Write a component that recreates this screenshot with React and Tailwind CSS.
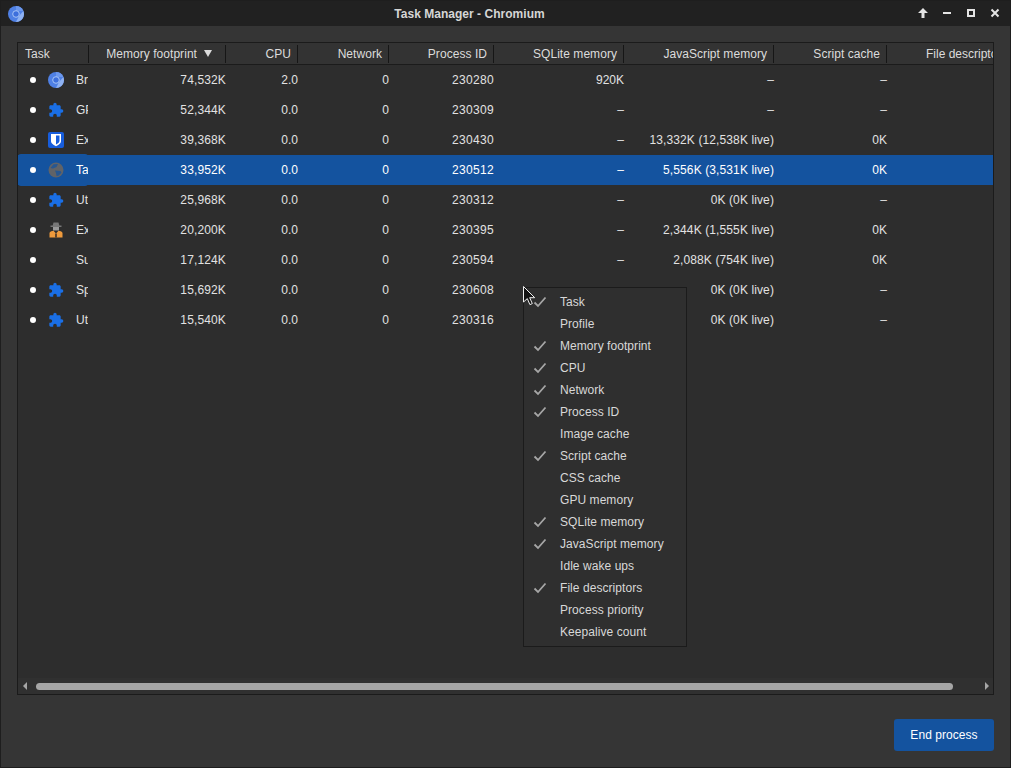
import { MdExtension } from 'react-icons/md';

const columns = 'grid-cols-[70px_138px_72px_91px_105px_130px_150px_113px_120px]';

const rows = [
  { icon: 'chromium', name: 'Browser', mem: '74,532K', cpu: '2.0', net: '0', pid: '230280', sql: '920K', js: '–', script: '–' },
  { icon: 'puzzle', name: 'GPU Process', mem: '52,344K', cpu: '0.0', net: '0', pid: '230309', sql: '–', js: '–', script: '–' },
  { icon: 'shield', name: 'Extension', mem: '39,368K', cpu: '0.0', net: '0', pid: '230430', sql: '–', js: '13,332K (12,538K live)', script: '0K' },
  { icon: 'globe', name: 'Tab', mem: '33,952K', cpu: '0.0', net: '0', pid: '230512', sql: '–', js: '5,556K (3,531K live)', script: '0K', selected: true },
  { icon: 'puzzle', name: 'Utility', mem: '25,968K', cpu: '0.0', net: '0', pid: '230312', sql: '–', js: '0K (0K live)', script: '–' },
  { icon: 'spy', name: 'Extension', mem: '20,200K', cpu: '0.0', net: '0', pid: '230395', sql: '–', js: '2,344K (1,555K live)', script: '0K' },
  { icon: null, name: 'Subframe', mem: '17,124K', cpu: '0.0', net: '0', pid: '230594', sql: '–', js: '2,088K (754K live)', script: '0K' },
  { icon: 'puzzle', name: 'Spare', mem: '15,692K', cpu: '0.0', net: '0', pid: '230608', sql: '–', js: '0K (0K live)', script: '–' },
  { icon: 'puzzle', name: 'Utility', mem: '15,540K', cpu: '0.0', net: '0', pid: '230316', sql: '–', js: '0K (0K live)', script: '–' },
];

const menuItems = [
  ['Task', true],
  ['Profile', false],
  ['Memory footprint', true],
  ['CPU', true],
  ['Network', true],
  ['Process ID', true],
  ['Image cache', false],
  ['Script cache', true],
  ['CSS cache', false],
  ['GPU memory', false],
  ['SQLite memory', true],
  ['JavaScript memory', true],
  ['Idle wake ups', false],
  ['File descriptors', true],
  ['Process priority', false],
  ['Keepalive count', false],
];

function ChromiumIcon() {
  return (
    <svg width="16" height="16" viewBox="0 0 16 16">
      <circle cx="8" cy="8" r="8" fill="#4f80e4" />
      <path d="M8 0a8 8 0 0 1 7.400 5H8z" fill="#6b97ec" />
      <path d="M15.400 5A8 8 0 0 1 8 16l3-6z" fill="#8fb2f2" />
      <circle cx="8" cy="8" r="3.300" fill="#3d6fdc" stroke="#a9c5f6" strokeWidth="1" />
    </svg>
  );
}

function RowIcon({ type }) {
  if (type === 'chromium') return <ChromiumIcon />;
  if (type === 'puzzle') return <MdExtension size={18} color="#1a6fe6" />;
  if (type === 'shield') {
    return (
      <svg width="16" height="16" viewBox="0 0 16 16">
        <rect width="16" height="16" rx="2" fill="#175ddc" />
        <path d="M3 2h10v7c0 2.500-2.700 4-5 5.200C5.700 13 3 11.500 3 9z" fill="#fff" />
        <path d="M8 3.500v9c1.700-.9 3.500-2 3.500-3.700V3.500z" fill="#175ddc" />
      </svg>
    );
  }
  if (type === 'globe') {
    return (
      <svg width="16" height="16" viewBox="0 0 16 16">
        <circle cx="8" cy="8" r="7.500" fill="#606368" />
        <path d="M5.500 2.200 10 2 8.500 5 5 6.500 2.500 6zM7 8.500l5.500 .5 1 1.500-3 3.200-2 .3-.5-3z" fill="#14539f" opacity="0.75" />
      </svg>
    );
  }
  if (type === 'spy') {
    return (
      <svg width="16" height="16" viewBox="0 0 16 16">
        <path d="M5.500 0.500h5l.8 3h2.200v1.500h-11V3.500h2.200z" fill="#777777" />
        <rect x="5" y="5" width="6" height="3.500" fill="#999999" />
        <path d="M1.500 15.500v-4.500C1.500 9.800 3.500 9 5.500 8.800L8 11.500l2.500-2.700c2 .2 4 1 4 2.200v4.500z" fill="#ee9a3c" />
        <path d="M7.200 11.500h1.600v4H7.200z" fill="#3d3026" />
      </svg>
    );
  }
  return null;
}

function HeaderCell({ children, className = '' }) {
  return (
    <div className={`flex items-center justify-end h-[18px] pr-[6px] whitespace-nowrap border-r border-[#161616] tracking-[0.05px] ${className}`}>
      {children}
    </div>
  );
}

function Cell({ children, className = '' }) {
  return <div className={`text-right whitespace-nowrap ${className}`}>{children}</div>;
}

function Row({ row }) {
  return (
    <div className={`grid ${columns} items-center h-[30px] w-max ${row.selected ? 'bg-[#14539f] text-white' : ''}`}>
      <div className={`flex items-center overflow-hidden ${row.selected ? 'h-[32px] -my-[1px] bg-[#14539f] rounded-[3px]' : 'h-[30px]'}`}>
        <span className="w-[6px] h-[6px] rounded-full bg-white ml-[12px] shrink-0" />
        <span className="w-[16px] h-[16px] ml-[12px] flex items-center justify-center shrink-0">
          <RowIcon type={row.icon} />
        </span>
        <span className="ml-[12px] whitespace-nowrap">{row.name}</span>
      </div>
      <Cell className="tracking-[0.14px]">{row.mem}</Cell>
      <Cell>{row.cpu}</Cell>
      <Cell>{row.net}</Cell>
      <Cell className="tracking-[0.33px]">{row.pid}</Cell>
      <Cell>{row.sql}</Cell>
      <Cell className="tracking-[0.11px]">{row.js}</Cell>
      <Cell>{row.script}</Cell>
      <Cell></Cell>
    </div>
  );
}

function Menu() {
  return (
    <div className="absolute left-[522px] top-[286px] w-[164px] h-[360px] py-[3px] bg-[#2f2f2f] border border-[#1b1b1b] text-[#d8d8d8] tracking-[0.06px]">
      {menuItems.map(([label, checked]) => (
        <div key={label} className="flex items-center h-[22px]">
          <span className="w-[32px] mr-[4px] flex justify-center shrink-0">
            {checked && (
              <svg width="14" height="12" viewBox="0 0 14 12" fill="none" stroke="#a6a6a6" strokeWidth="1.800">
                <path d="M1.500 6.500 5 10l7.500-8.500" />
              </svg>
            )}
          </span>
          <span>{label}</span>
        </div>
      ))}
    </div>
  );
}

function Cursor() {
  return (
    <svg className="absolute left-[522px] top-[285px]" width="14" height="20" viewBox="0 0 14 20">
      <path d="M.5.500v15.500l3.800-3.400 2.600 6 2.400-1-2.600-5.900h5z" fill="#111" stroke="#eee" strokeWidth="1" />
    </svg>
  );
}

export default function App() {
  return (
    <div className="relative w-[1011px] h-[768px] flex flex-col overflow-hidden bg-[#353535] border border-[#1e1e1e] text-[12px] text-[#e2e2e2] font-['Liberation_Sans',Arial,sans-serif]">
      {/* title bar */}
      <div className="relative flex items-center justify-center h-[25px] shrink-0 pr-[72px] bg-[#212121] text-[#d6d6d6] font-bold">
        <span className="absolute left-[7px] top-[5px]"><ChromiumIcon /></span>
        <span className="tracking-[0.03px]">Task Manager - Chromium</span>
        <div className="absolute right-[9px] top-[6px] flex items-center gap-[12px]">
          <svg width="12" height="12" viewBox="0 0 12 12" fill="#e4e4e4">
            <path d="M6 1 11 6H7.500v5h-3V6H1z" />
          </svg>
          <svg width="12" height="12" viewBox="0 0 12 12" fill="#e4e4e4">
            <rect x="2" y="5" width="8" height="2" />
          </svg>
          <svg width="12" height="12" viewBox="0 0 12 12" fill="none" stroke="#e4e4e4" strokeWidth="2">
            <rect x="3" y="3" width="6" height="6" />
          </svg>
          <svg width="12" height="12" viewBox="0 0 12 12" fill="none" stroke="#e4e4e4" strokeWidth="2">
            <path d="M2.500 2.500l7 7M9.500 2.500l-7 7" />
          </svg>
        </div>
      </div>

      {/* content */}
      <div className="flex-1 flex flex-col pt-[16px] px-[16px] pb-[15px]">
        <div className="flex flex-col w-[977px] h-[653px] border border-[#1b1b1b] bg-[#2d2d2d] overflow-hidden">
          <div className={`grid ${columns} items-center h-[22px] shrink-0 w-max bg-[#333333] border-b border-[#1b1b1b] text-[#dcdcdc]`}>
            <div className="flex items-center h-[18px] w-[71px] pl-[7px] border-r border-[#161616]">Task</div>
            <HeaderCell>
              <span>Memory footprint</span>
              <span className="ml-[7px] mr-[7px] w-0 h-0 border-x-[4px] border-x-transparent border-t-[7px] border-t-[#dcdcdc]" />
            </HeaderCell>
            <HeaderCell>CPU</HeaderCell>
            <HeaderCell>Network</HeaderCell>
            <HeaderCell>Process ID</HeaderCell>
            <HeaderCell>SQLite memory</HeaderCell>
            <HeaderCell>JavaScript memory</HeaderCell>
            <HeaderCell>Script cache</HeaderCell>
            <div className="h-[18px] flex items-center pl-[39px] whitespace-nowrap">File descriptors</div>
          </div>

          <div className="flex-1 overflow-hidden">
            {rows.map((row) => (
              <Row key={row.pid} row={row} />
            ))}
          </div>

          {/* horizontal scrollbar */}
          <div className="flex items-center h-[16px] shrink-0 bg-[#303030]">
            <span className="ml-[5px] w-0 h-0 border-y-[4px] border-y-transparent border-r-[4px] border-r-[#a6a6a6]" />
            <div className="ml-[9px] w-[917px] h-[7px] rounded-full bg-[#a6a6a6]" />
            <span className="ml-[32px] w-0 h-0 border-y-[4px] border-y-transparent border-l-[4px] border-l-[#a6a6a6]" />
          </div>
        </div>

        <div className="flex justify-end mt-[24px]">
          <button className="w-[100px] h-[32px] rounded-[3px] bg-[#14539f] text-white tracking-[0.05px]">End process</button>
        </div>
      </div>

      <Menu />
      <Cursor />
    </div>
  );
}
